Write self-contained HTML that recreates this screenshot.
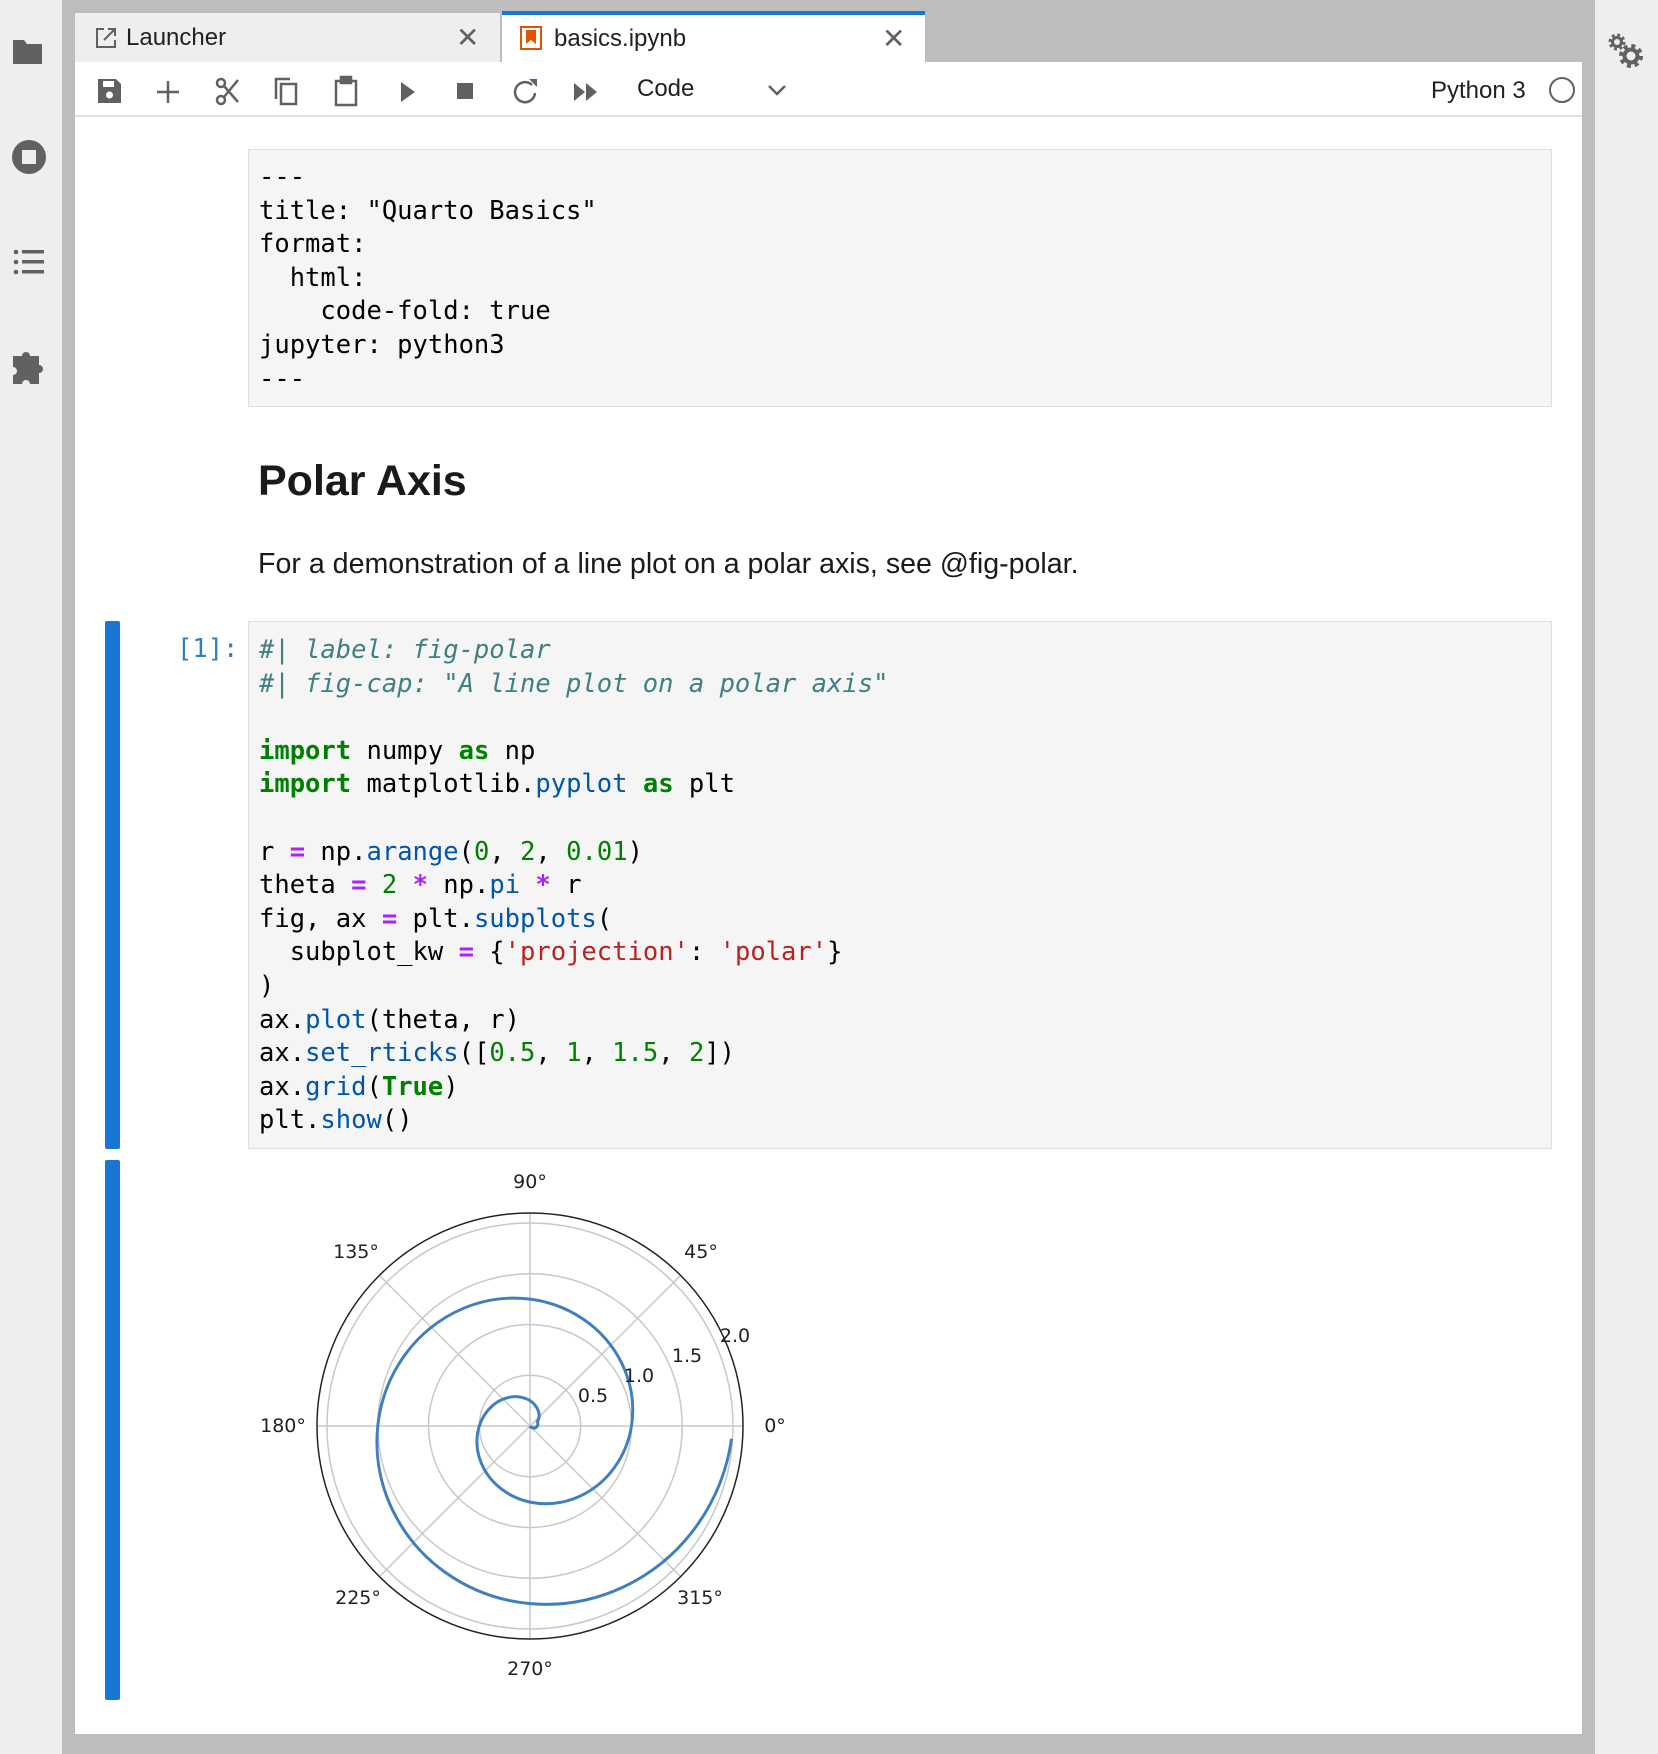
<!DOCTYPE html>
<html><head><meta charset="utf-8">
<style>
*{margin:0;padding:0;box-sizing:border-box}
body{width:1658px;height:1754px;background:#bdbdbd;position:relative;overflow:hidden;font-family:"Liberation Sans",sans-serif;color:#212121}
.abs{position:absolute}
#lsb{left:0;top:0;width:62px;height:1754px;background:#eeeeee}
#rsb{left:1595px;top:0;width:63px;height:1754px;background:#eeeeee}
.tab{top:13px;height:49px;background:#eeeeee;font-size:24px;line-height:49px}
#main{left:75px;top:62px;width:1507px;height:1672px;background:#fff}
#tb{left:75px;top:62px;width:1507px;height:55px;background:#fff;border-bottom:2px solid #e0e0e0}
.cell{background:#f5f5f5;border:1px solid #e0e0e0}
.code{font-family:"DejaVu Sans Mono","Liberation Mono",monospace;font-size:25.5px;line-height:33.6px;white-space:pre;color:#000}
.cm{color:#408080;font-style:italic}.kw{color:#008000;font-weight:bold}.fn{color:#0055aa}.op{color:#aa22ff;font-weight:bold}.nu{color:#008000}.st{color:#ba2121}
.bar{background:#1976d2;width:15px;border-radius:2px}
</style></head><body>
<div class="abs" id="lsb"></div>
<div class="abs" id="rsb"></div>
<svg class="abs" style="left:0;top:0" width="62" height="420">
 <path d="M13 40 h11 l3 4 h15 v20 h-29z" fill="#616161"/>
 <circle cx="29" cy="157" r="17" fill="#616161"/><rect x="22" y="150" width="14" height="14" fill="#eee"/>
 <g fill="#616161"><circle cx="16" cy="252" r="2.3"/><circle cx="16" cy="262" r="2.3"/><circle cx="16" cy="272" r="2.3"/>
 <rect x="22" y="250" width="22" height="3.5"/><rect x="22" y="260" width="22" height="3.5"/><rect x="22" y="270" width="22" height="3.5"/>
 <path d="M13 356 h9 a4 4 0 1 1 8 0 h9 v9 a4 4 0 1 1 0 8 v11 h-9 a4 4 0 1 0 -8 0 h-9 v-9 a4 4 0 1 0 0 -8z"/></g>
</svg>
<svg class="abs" style="left:1605px;top:30px" width="45" height="45">
 <g fill="none" stroke="#616161" stroke-linecap="butt">
  <circle cx="12" cy="12" r="4.5" stroke-width="3"/>
  <circle cx="12" cy="12" r="7" stroke-width="3" stroke-dasharray="2.8 2.7"/>
  <circle cx="26" cy="26" r="6.5" stroke-width="4"/>
  <circle cx="26" cy="26" r="10" stroke-width="4" stroke-dasharray="4 3.85"/>
 </g></svg>
<div class="abs tab" style="left:75px;width:425px"><span class="abs" style="left:51px">Launcher</span>
 <svg class="abs" style="left:20px;top:14px" width="22" height="22"><path d="M9 2H2v18h18v-7M13 2h7v7M20 2 9 13" fill="none" stroke="#616161" stroke-width="2"/></svg>
 <span class="abs" style="left:381px;font-size:28px;color:#616161">✕</span></div>
<div class="abs tab" style="left:502px;width:423px;top:11px;height:51px;background:#fff;border-top:4px solid #1976d2;line-height:47px"><span class="abs" style="left:52px">basics.ipynb</span>
 <svg class="abs" style="left:18px;top:11px" width="22" height="24"><rect x="1" y="1" width="20" height="22" fill="none" stroke="#e65100" stroke-width="2"/><path d="M6 4h10v14l-5-4-5 4z" fill="#e65100"/></svg>
 <span class="abs" style="left:380px;font-size:28px;color:#616161">✕</span></div>
<div class="abs" id="main"></div>
<div class="abs" id="tb">
<svg class="abs" style="left:0;top:0" width="800" height="55"><g fill="#616161" stroke="#616161">
 <path d="M23 17h18l5 5v19h-23z" stroke="none"/><rect x="28" y="19" width="11" height="6" fill="#fff" stroke="none"/><circle cx="34.5" cy="33" r="3.5" fill="#fff" stroke="none"/>
 <path d="M93 19v22M82 30h22" stroke-width="2.5" fill="none"/>
 <g fill="none" stroke-width="2.5"><circle cx="146" cy="21" r="4"/><circle cx="146" cy="38" r="4"/><path d="M149 24 163 40M149 35 163 18"/></g>
 <g fill="none" stroke-width="2.5"><rect x="206" y="22" width="15" height="20"/><path d="M201 37V17h14"/></g>
 <g fill="none" stroke-width="2.5"><rect x="261" y="19" width="20" height="24"/><rect x="266" y="15" width="10" height="6" fill="#616161"/></g>
 <path d="M326 20v20l14-10z" stroke="none"/>
 <rect x="382" y="21" width="16" height="16" stroke="none"/>
 <path d="M457 23a10 10 0 1 0 3 8" fill="none" stroke-width="2.5"/><path d="M454 17h8v8z" stroke="none"/>
 <path d="M499 21v18l11-9zM511 21v18l11-9z" stroke="none"/>
 <path d="M694 24l8 8 8-8" fill="none" stroke-width="2.5"/>
 </g></svg>
 <span class="abs" style="left:562px;top:13px;font-size:24px">Code</span>
 <span class="abs" style="left:1356px;top:15px;font-size:24px">Python 3</span>
 <div class="abs" style="left:1474px;top:15px;width:26px;height:26px;border:2px solid #616161;border-radius:50%"></div>
</div>
<div class="abs cell code" style="left:248px;top:149px;width:1304px;height:258px;padding:11px 0 0 10px">---
title: "Quarto Basics"
format:
  html:
    code-fold: true
jupyter: python3
---</div>
<div class="abs" style="left:258px;top:457px;font-size:43px;font-weight:bold;color:#1a1a1a">Polar Axis</div>
<div class="abs" style="left:258px;top:548px;font-size:28.6px;color:#1a1a1a">For a demonstration of a line plot on a polar axis, see @fig-polar.</div>
<div class="abs bar" style="left:105px;top:621px;height:528px"></div>
<div class="abs code" style="left:177px;top:633px;color:#307fc1">[1]:</div>
<div class="abs cell code" style="left:248px;top:621px;width:1304px;height:528px;padding:12px 0 0 10px"><span class="cm">#| label: fig-polar</span>
<span class="cm">#| fig-cap: "A line plot on a polar axis"</span>

<span class="kw">import</span> numpy <span class="kw">as</span> np
<span class="kw">import</span> matplotlib.<span class="fn">pyplot</span> <span class="kw">as</span> plt

r <span class="op">=</span> np.<span class="fn">arange</span>(<span class="nu">0</span>, <span class="nu">2</span>, <span class="nu">0.01</span>)
theta <span class="op">=</span> <span class="nu">2</span> <span class="op">*</span> np.<span class="fn">pi</span> <span class="op">*</span> r
fig, ax <span class="op">=</span> plt.<span class="fn">subplots</span>(
  subplot_kw <span class="op">=</span> {<span class="st">'projection'</span>: <span class="st">'polar'</span>}
)
ax.<span class="fn">plot</span>(theta, r)
ax.<span class="fn">set_rticks</span>([<span class="nu">0.5</span>, <span class="nu">1</span>, <span class="nu">1.5</span>, <span class="nu">2</span>])
ax.<span class="fn">grid</span>(<span class="kw">True</span>)
plt.<span class="fn">show</span>()</div>
<div class="abs bar" style="left:105px;top:1160px;height:540px"></div>
<svg class="abs" style="left:230px;top:1160px" width="600" height="540" font-family="DejaVu Sans,sans-serif" font-size="19" fill="#222">
<g transform="translate(300,266)">
 <g fill="none" stroke="#c8c8c8" stroke-width="1.5">
  <circle r="50.7"/><circle r="101.5"/><circle r="152.2"/><circle r="203"/>
  <path d="M-213 0H213M0 -213V213M-150.6 -150.6 150.6 150.6M-150.6 150.6 150.6 -150.6"/>
 </g>
 <circle r="213" fill="none" stroke="#222" stroke-width="1.5"/>
 <g transform="scale(0.953)"><path fill="none" stroke="#3f7fbf" stroke-width="3.1" d="M0 0 A4.4 4.4 0 0 0 7.69 -4.44 A13.3 13.3 0 0 0 8.88 -15.37 A22.2 22.2 0 0 0 0 -26.63 A31 31 0 0 0 -17.75 -30.74 A40 40 0 0 0 -38.43 -22.19 A48.8 48.8 0 0 0 -53.25 0 A57.7 57.7 0 0 0 -53.8 31.06 A66.6 66.6 0 0 0 -35.5 61.49 A75.4 75.4 0 0 0 0 79.88 A84.3 84.3 0 0 0 44.38 76.86 A93.2 93.2 0 0 0 84.55 48.81 A102 102 0 0 0 106.5 0 A111 111 0 0 0 99.92 -57.69 A119.8 119.8 0 0 0 62.13 -107.6 A128.7 128.7 0 0 0 0 -133.13 A137.6 137.6 0 0 0 -71 -122.97 A146.4 146.4 0 0 0 -130.66 -75.44 A155.3 155.3 0 0 0 -159.75 0 A164.2 164.2 0 0 0 -146.04 84.31 A173 173 0 0 0 -88.75 153.72 A182 182 0 0 0 0 186.38 A190.8 190.8 0 0 0 97.63 169.09 A199.7 199.7 0 0 0 176.78 102.06 A207 207 0 0 0 211.5 13.3"/></g>
</g>
<g text-anchor="middle" dominant-baseline="central">
 <text x="300" y="22">90°</text><text x="300" y="509">270°</text>
 <text x="545" y="266">0°</text><text x="53" y="266">180°</text>
 <text x="471" y="92">45°</text><text x="126" y="92">135°</text>
 <text x="128" y="438">225°</text><text x="470" y="438">315°</text>
 <text x="363" y="236">0.5</text><text x="409" y="216">1.0</text><text x="457" y="196">1.5</text><text x="505" y="176">2.0</text>
</g>
</svg>
</body></html>
